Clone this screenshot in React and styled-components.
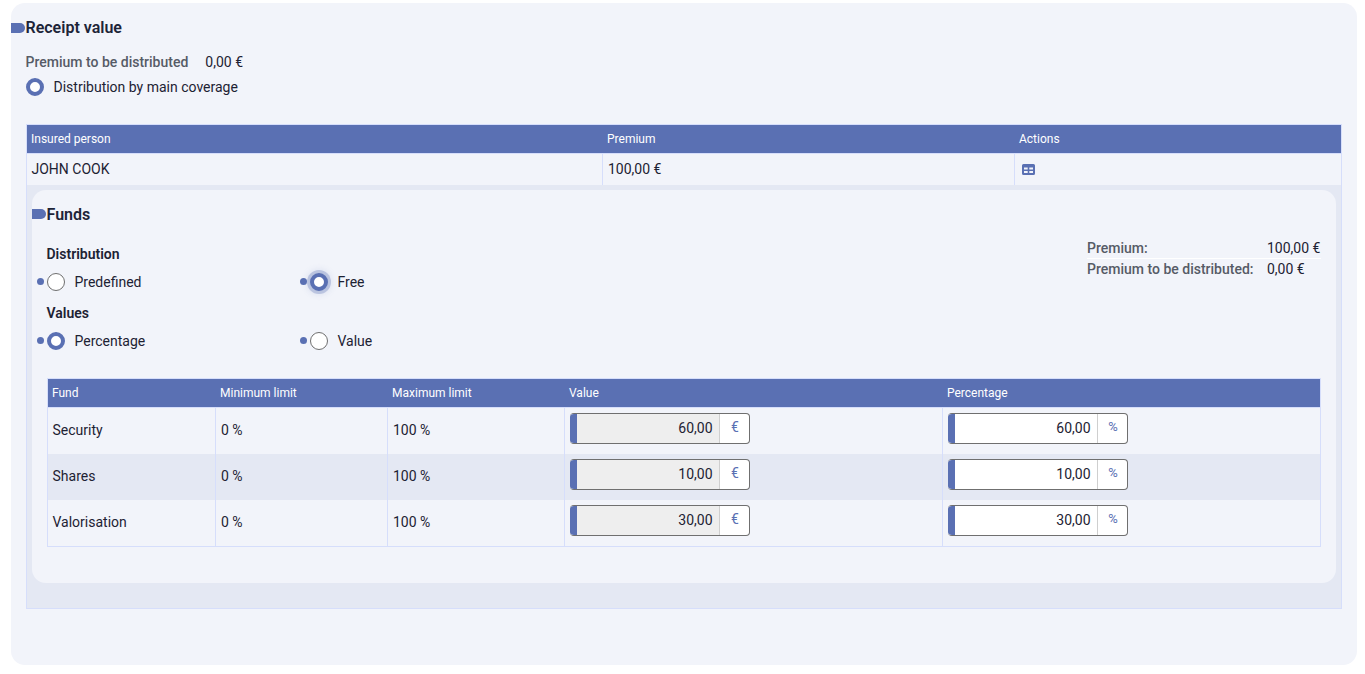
import React from 'react';
import styled, { createGlobalStyle } from 'styled-components';

const funds = [
  { name: 'Security', value: '60,00', percentage: '60,00' },
  { name: 'Shares', value: '10,00', percentage: '10,00', shaded: true },
  { name: 'Valorisation', value: '30,00', percentage: '30,00' },
];

const GlobalStyle = createGlobalStyle`
  html, body {
    margin: 0;
    background: #fff;
    font-family: Roboto, "Liberation Sans", sans-serif;
    font-size: 14px;
    color: #1d2233;
  }
`;

const Page = styled.div`
  padding: 3px 8px 9px 11px;
`;

const Panel = styled.section`
  height: 662px;
  box-sizing: border-box;
  padding: 14px 15px 0;
  background: #f2f4fa;
  border-radius: 14px;
`;

const Heading = styled.h2`
  display: flex;
  align-items: center;
  gap: 0.5px;
  height: 21px;
  margin: 0 0 0 -15px;
  font-size: 16px;
  font-weight: 600;
  line-height: 21px;
  color: #1d2438;
`;

const Marker = styled.span`
  width: 14px;
  height: 10px;
  background: #5a70b3;
  border-radius: 0 6px 6px 0;
`;

const SummaryLine = styled.div`
  display: flex;
  gap: 17px;
  margin: 14px 0 0 -0.5px;
  line-height: 20px;
`;

const Label = styled.span`
  font-weight: 500;
  color: #565b66;
`;

const Radio = styled.span`
  flex: none;
  width: 18px;
  height: 18px;
  box-sizing: border-box;
  background: #fff;
  border-radius: 50%;
  border: ${(p) => (p.$checked ? '4px solid #5a70b3' : '1px solid #6f6f6f')};
  box-shadow: ${(p) => (p.$focused ? '0 0 0 3px rgba(90, 112, 179, 0.3), 0 0 6px 4px rgba(90, 112, 179, 0.12)' : 'none')};
`;

const MainOption = styled.label`
  display: flex;
  align-items: center;
  gap: 9.5px;
  height: 20px;
  margin-top: 5px;
`;

const OuterTable = styled.table`
  width: 1316px;
  margin-top: 27px;
  border-collapse: collapse;
  table-layout: fixed;
  border: 1px solid #d6defb;
`;

const HeadCell = styled.th`
  height: 28px;
  padding: 0 4.5px;
  background: #5a70b3;
  color: #fff;
  font-size: 12px;
  font-weight: 400;
  text-align: left;
  border-bottom: 1px solid #d6defb;
  &:first-child {
    padding-left: 4px;
  }
`;

const Cell = styled.td`
  height: 31px;
  box-sizing: border-box;
  padding: 0 4px 1px 5px;
  border-right: 1px solid #d6defb;
  &:first-child {
    padding-left: 4.5px;
  }
  &:last-child {
    border-right: 0;
  }
`;

const ExpandedCell = styled.td`
  height: 423px;
  box-sizing: border-box;
  padding: 5px 5px 25px;
  background: #e4e8f3;
  vertical-align: top;
`;

const ActionIcon = styled.svg`
  display: block;
  width: 13px;
  height: 11px;
  margin: 1px 0 0 2px;
`;

const FundsCard = styled.div`
  height: 393px;
  box-sizing: border-box;
  padding: 14px 15px 0;
  background: #f2f4fa;
  border-radius: 14px;
`;

const FundsTop = styled.div`
  display: flex;
  justify-content: space-between;
  align-items: flex-start;
  margin-top: 19px;
`;

const GroupTitle = styled.div`
  margin: 0 0 8px -0.5px;
  font-weight: 600;
  line-height: 20px;
  color: #1d2233;
`;

const OptionGroup = styled.div`
  margin-bottom: 11px;
`;

const OptionRow = styled.div`
  display: grid;
  grid-template-columns: 263px 120px;
  margin-left: -10px;
`;

const Option = styled.label`
  display: flex;
  align-items: center;
  height: 20px;
`;

const Dot = styled.span`
  width: 7px;
  height: 7px;
  margin-right: 3px;
  background: #5a70b3;
  border-radius: 50%;
`;

const OptionText = styled.span`
  margin-left: 9.5px;
`;

const Totals = styled.dl`
  display: grid;
  grid-template-columns: 180px 54px;
  margin: -6px 0 0;
  line-height: 20px;
  dt, dd {
    margin: 0;
    height: 20px;
  }
  dt {
    font-weight: 500;
    color: #565b66;
  }
`;

const TotalsDivider = styled.div`
  grid-column: 1 / -1;
  height: 1px;
  background: #fff;
`;

const FundsTable = styled.table`
  width: 1274px;
  margin-top: 16px;
  border-collapse: collapse;
  table-layout: fixed;
  border: 1px solid #d6defb;
`;

const FundRow = styled.tr`
  background: ${(p) => (p.$shaded ? '#e4e8f3' : 'transparent')};
  &:first-child td {
    height: 47px;
  }
`;

const FundCell = styled.td`
  height: 46px;
  box-sizing: border-box;
  padding: ${(p) => (p.$field ? '5px' : '12px')} 5px 0;
  line-height: 20px;
  vertical-align: top;
  border-right: 1px solid #d6defb;
  &:first-child {
    padding-left: 4.5px;
  }
  &:last-child {
    border-right: 0;
  }
`;

const Amount = styled.div`
  display: flex;
  width: 180px;
  height: 31px;
  box-sizing: border-box;
  overflow: hidden;
  background: #fff;
  border: 1px solid #6f6f6f;
  border-left: 0;
  border-radius: 4px;
`;

const AmountValue = styled.div`
  flex: 1;
  padding-right: 6.5px;
  background: ${(p) => (p.$readOnly ? '#eeeeee' : '#fff')};
  border-left: 7px solid #5a70b3;
  border-right: 1px solid #cfcfcf;
  font-size: 14px;
  line-height: 29px;
  text-align: right;
`;

const Unit = styled.div`
  flex: none;
  width: 29px;
  padding-left: 1px;
  box-sizing: border-box;
  font-size: ${(p) => (p.$small ? '13px' : '14px')};
  line-height: 26px;
  text-align: center;
  color: #5a70b3;
`;

const AmountField = ({ value, unit, readOnly }) => (
  <Amount>
    <AmountValue $readOnly={readOnly}>{value}</AmountValue>
    <Unit $small={unit === '%'}>{unit}</Unit>
  </Amount>
);

const App = () => (
  <Page>
    <GlobalStyle />
    <Panel>
      <Heading>
        <Marker />
        Receipt value
      </Heading>
      <SummaryLine>
        <Label>Premium to be distributed</Label>
        <span>0,00 €</span>
      </SummaryLine>
      <MainOption>
        <Radio $checked />
        Distribution by main coverage
      </MainOption>

      <OuterTable>
        <colgroup>
          <col style={{ width: 576 }} />
          <col style={{ width: 412 }} />
          <col />
        </colgroup>
        <thead>
          <tr>
            <HeadCell>Insured person</HeadCell>
            <HeadCell>Premium</HeadCell>
            <HeadCell>Actions</HeadCell>
          </tr>
        </thead>
        <tbody>
          <tr>
            <Cell>JOHN COOK</Cell>
            <Cell>100,00 €</Cell>
            <Cell>
              <ActionIcon viewBox="0 0 13 11">
                <path
                  fill="#5a70b3"
                  fillRule="evenodd"
                  d="M1.5 0h10A1.5 1.5 0 0 1 13 1.5v8a1.5 1.5 0 0 1-1.5 1.5h-10A1.5 1.5 0 0 1 0 9.5v-8A1.5 1.5 0 0 1 1.5 0zM2 3.5v2h3.7v-2zM7.3 3.5v2H11v-2zM2 7v2h3.7V7zM7.3 7v2H11V7z"
                />
              </ActionIcon>
            </Cell>
          </tr>
          <tr>
            <ExpandedCell colSpan={3}>
              <FundsCard>
                <Heading>
                  <Marker />
                  Funds
                </Heading>
                <FundsTop>
                  <div>
                    <OptionGroup>
                      <GroupTitle>Distribution</GroupTitle>
                      <OptionRow>
                        <Option>
                          <Dot />
                          <Radio />
                          <OptionText>Predefined</OptionText>
                        </Option>
                        <Option>
                          <Dot />
                          <Radio $checked $focused />
                          <OptionText>Free</OptionText>
                        </Option>
                      </OptionRow>
                    </OptionGroup>
                    <OptionGroup>
                      <GroupTitle>Values</GroupTitle>
                      <OptionRow>
                        <Option>
                          <Dot />
                          <Radio $checked />
                          <OptionText>Percentage</OptionText>
                        </Option>
                        <Option>
                          <Dot />
                          <Radio />
                          <OptionText>Value</OptionText>
                        </Option>
                      </OptionRow>
                    </OptionGroup>
                  </div>
                  <Totals>
                    <dt>Premium:</dt>
                    <dd>100,00 €</dd>
                    <TotalsDivider />
                    <dt>Premium to be distributed:</dt>
                    <dd>0,00 €</dd>
                  </Totals>
                </FundsTop>
                <FundsTable>
                  <colgroup>
                    <col style={{ width: 168 }} />
                    <col style={{ width: 172 }} />
                    <col style={{ width: 177 }} />
                    <col style={{ width: 378 }} />
                    <col />
                  </colgroup>
                  <thead>
                    <tr>
                      <HeadCell>Fund</HeadCell>
                      <HeadCell>Minimum limit</HeadCell>
                      <HeadCell>Maximum limit</HeadCell>
                      <HeadCell>Value</HeadCell>
                      <HeadCell>Percentage</HeadCell>
                    </tr>
                  </thead>
                  <tbody>
                    {funds.map((fund) => (
                      <FundRow key={fund.name} $shaded={fund.shaded}>
                        <FundCell>{fund.name}</FundCell>
                        <FundCell>0 %</FundCell>
                        <FundCell>100 %</FundCell>
                        <FundCell $field>
                          <AmountField value={fund.value} unit="€" readOnly />
                        </FundCell>
                        <FundCell $field>
                          <AmountField value={fund.percentage} unit="%" />
                        </FundCell>
                      </FundRow>
                    ))}
                  </tbody>
                </FundsTable>
              </FundsCard>
            </ExpandedCell>
          </tr>
        </tbody>
      </OuterTable>
    </Panel>
  </Page>
);

export default App;
